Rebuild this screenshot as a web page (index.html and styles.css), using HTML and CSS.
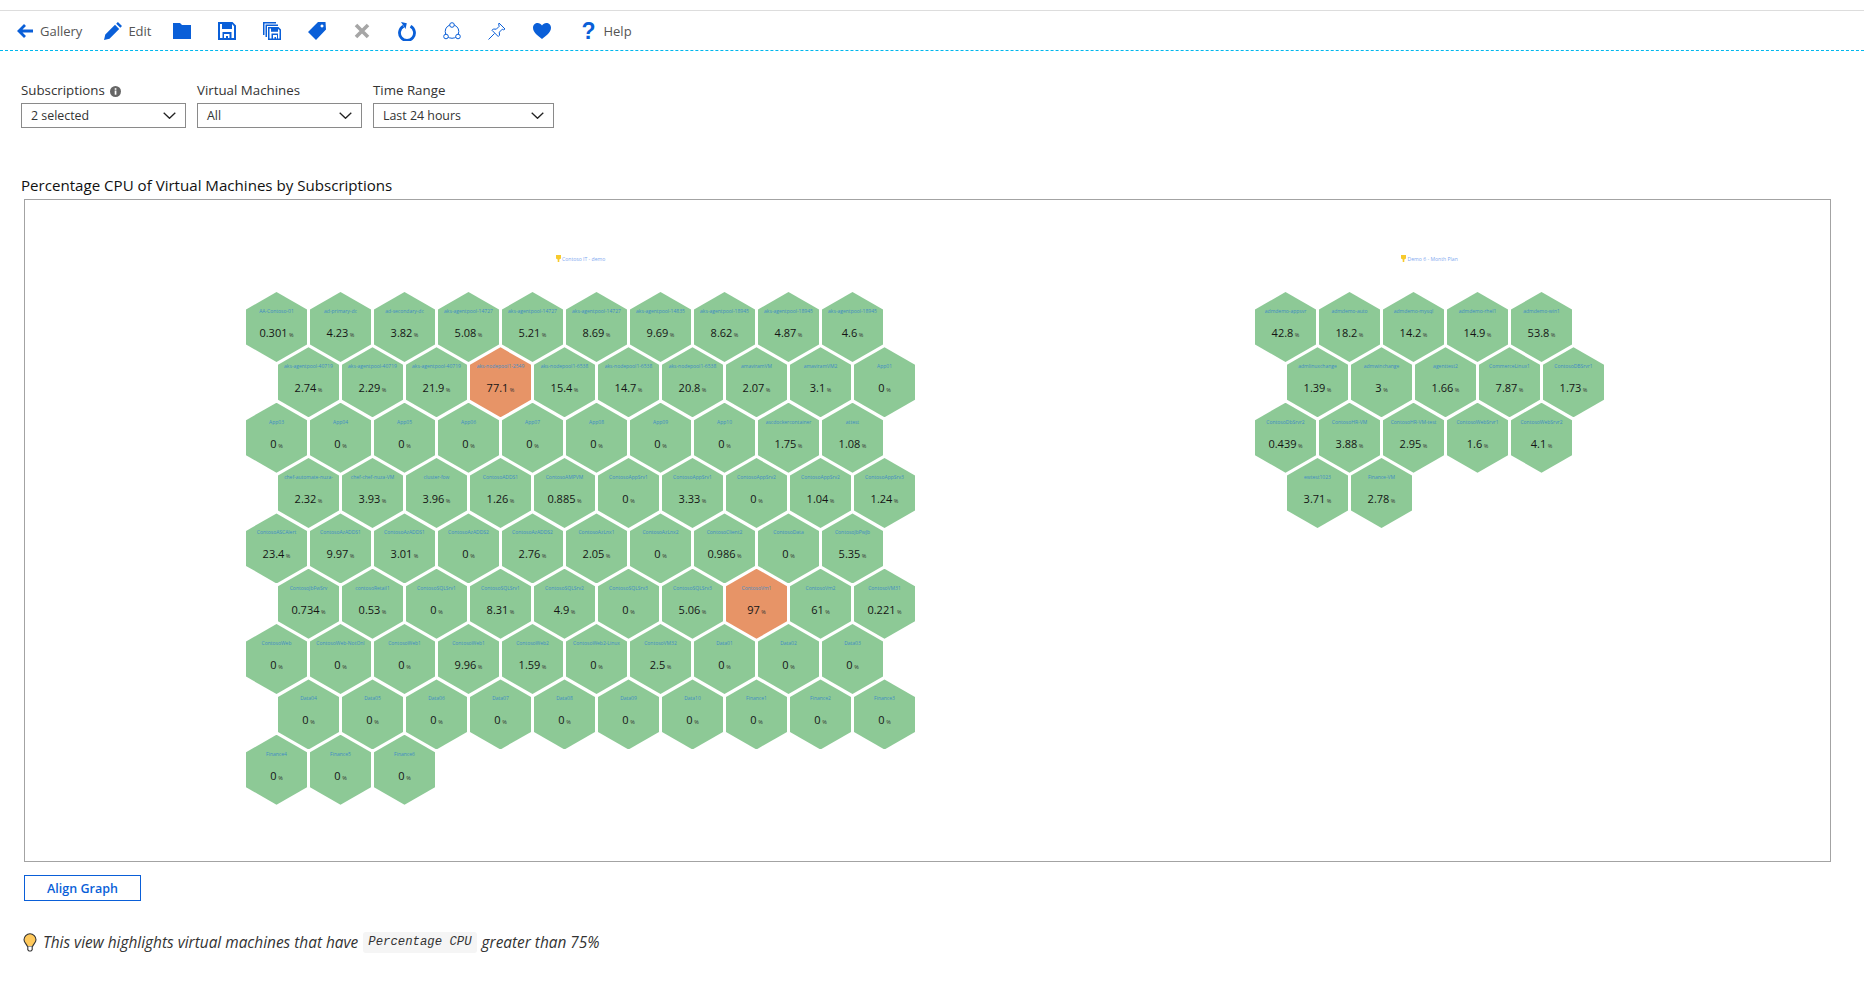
FILE: index.html
```html
<!DOCTYPE html>
<html lang="en">
<head>
<meta charset="utf-8">
<title>Percentage CPU of Virtual Machines</title>
<link rel="stylesheet" href="styles.css">
</head>
<body>
<div class="topline"></div>
<nav class="toolbar">
  <div class="tool tool-text"><svg class="ico" width="18" height="16" viewBox="0 0 18 16"><path class="st" d="M17 8H3M9 2L3 8l6 6"/></svg><span>Gallery</span></div>
  <div class="tool tool-text"><svg class="ico" width="18" height="18" viewBox="0 0 18 18"><path class="fl" d="M0 18l1.300-5.500L11 2.800l4.200 4.200L5.500 16.700zM12.200 1.700L13.900 0 18 4.100l-1.700 1.700z"/></svg><span>Edit</span></div>
  <div class="tool"><svg class="ico" width="18" height="16" viewBox="0 0 18 16"><path class="fl" d="M0 0h7l2 2h9v14H0z"/></svg></div>
  <div class="tool"><svg class="ico" width="18" height="18" viewBox="0 0 18 18"><path class="fl" fill-rule="evenodd" d="M0 0h14.500L18 3.500V18H0zM2 2v14h2.500v-6h9v6H16V4.300L14 2v5H4V2zM6 12v4h2v-2h2v2h1.500v-4z"/></svg></div>
  <div class="tool"><svg class="ico" width="18" height="18" viewBox="0 0 18 18"><path class="fl" fill-rule="evenodd" d="M0 0h13v1.500H1.500V13H0zM2.500 2.500H15v1.500H4V15H2.500zM5 5h10.500L18 7.500V18H5zM6.500 6.500v10h2v-5h6.500v5h1.500V8.200L15 6.800v3H8v-3.300zM10 13v3.500h1.500v-1.500h1.500v1.500H14V13z"/></svg></div>
  <div class="tool"><svg class="ico" width="18" height="18" viewBox="0 0 18 18"><path class="fl" fill-rule="evenodd" d="M10 0h7.500L18 7.500 8 18 0 10zM14 2.500a1.500 1.500 0 1 0 .01 0z"/></svg></div>
  <div class="tool"><svg class="ico" width="18" height="18" viewBox="0 0 18 18"><path class="st st-gray" d="M3 3l12 12M15 3L3 15"/></svg></div>
  <div class="tool"><svg class="ico" width="18" height="20" viewBox="0 0 18 20"><path class="st" d="M5.500 5.300a7.500 7.500 0 1 0 7 0"/><path class="fl" d="M3 1l5.800 1.200L7.500 8z"/></svg></div>
  <div class="tool"><svg class="ico" width="18" height="18" viewBox="0 0 18 18"><circle class="ln" cx="9" cy="9.500" r="6.800"/><circle class="wh" cx="9" cy="3" r="2.300"/><circle class="wh" cx="3" cy="14.500" r="2.300"/><circle class="wh" cx="15" cy="14.500" r="2.300"/></svg></div>
  <div class="tool"><svg class="ico" width="18" height="18" viewBox="0 0 18 18"><path class="ln" d="M11 1l6 6-1.500.8-1.200-.6-3 3 .2 3-1.300 1.300L4 8.300l1.300-1.300 3 .2 3-3-.6-1.200zM6.500 11.500L.5 17.500"/></svg></div>
  <div class="tool"><svg class="ico" width="18" height="16" viewBox="0 0 18 16"><path class="fl" d="M9 16C5 12.700 0 9.500 0 4.800 0 2 2.200 0 4.700 0 6.400 0 8 .9 9 2.500 10 .9 11.600 0 13.300 0 15.800 0 18 2 18 4.800 18 9.500 13 12.700 9 16z"/></svg></div>
  <div class="tool tool-help"><span class="qmark">?</span><span>Help</span></div>
</nav>

<main class="content">
  <section class="filters">
    <div class="filter">
      <label class="filter-label">Subscriptions <svg class="info" width="11" height="11" viewBox="0 0 11 11"><circle cx="5.500" cy="5.500" r="5.500" fill="#666"/><rect x="4.700" y="4.500" width="1.700" height="4.200" fill="#fff"/><rect x="4.700" y="2.200" width="1.700" height="1.600" fill="#fff"/></svg></label>
      <div class="select select-sm"><span>2 selected</span><svg width="13" height="7" viewBox="0 0 13 7"><path class="chev" d="M.7.7l5.800 5.600L12.300.7"/></svg></div>
    </div>
    <div class="filter">
      <label class="filter-label">Virtual Machines</label>
      <div class="select select-sm"><span>All</span><svg width="13" height="7" viewBox="0 0 13 7"><path class="chev" d="M.7.7l5.800 5.600L12.300.7"/></svg></div>
    </div>
    <div class="filter">
      <label class="filter-label">Time Range</label>
      <div class="select select-lg"><span>Last 24 hours</span><svg width="13" height="7" viewBox="0 0 13 7"><path class="chev" d="M.7.7l5.800 5.600L12.300.7"/></svg></div>
    </div>
  </section>

  <h2 class="graph-title">Percentage CPU of Virtual Machines by Subscriptions</h2>

  <section class="graph">
    <div class="group group-a">
      <div class="group-title"><svg width="5" height="7" viewBox="0 0 5 7"><path d="M0 0h5v3.500L3.300 4.500V7H1.700V4.500L0 3.500z" fill="#f7ca2d"/></svg> Contoso IT - demo</div>
      <div class="hexes">
        <div class="row">
          <div class="hex"><span class="name">AA-Contoso-01</span><span class="val">0.301<small>%</small></span></div>
          <div class="hex"><span class="name">ad-primary-dc</span><span class="val">4.23<small>%</small></span></div>
          <div class="hex"><span class="name">ad-secondary-dc</span><span class="val">3.82<small>%</small></span></div>
          <div class="hex"><span class="name">aks-agentpool-14727</span><span class="val">5.08<small>%</small></span></div>
          <div class="hex"><span class="name">aks-agentpool-14727</span><span class="val">5.21<small>%</small></span></div>
          <div class="hex"><span class="name">aks-agentpool-14727</span><span class="val">8.69<small>%</small></span></div>
          <div class="hex"><span class="name">aks-agentpool-14835</span><span class="val">9.69<small>%</small></span></div>
          <div class="hex"><span class="name">aks-agentpool-18945</span><span class="val">8.62<small>%</small></span></div>
          <div class="hex"><span class="name">aks-agentpool-18945</span><span class="val">4.87<small>%</small></span></div>
          <div class="hex"><span class="name">aks-agentpool-18945</span><span class="val">4.6<small>%</small></span></div>
        </div>
        <div class="row row-odd">
          <div class="hex"><span class="name">aks-agentpool-40719</span><span class="val">2.74<small>%</small></span></div>
          <div class="hex"><span class="name">aks-agentpool-40719</span><span class="val">2.29<small>%</small></span></div>
          <div class="hex"><span class="name">aks-agentpool-40719</span><span class="val">21.9<small>%</small></span></div>
          <div class="hex hot"><span class="name">aks-nodepool1-2549</span><span class="val">77.1<small>%</small></span></div>
          <div class="hex"><span class="name">aks-nodepool1-6538</span><span class="val">15.4<small>%</small></span></div>
          <div class="hex"><span class="name">aks-nodepool1-6538</span><span class="val">14.7<small>%</small></span></div>
          <div class="hex"><span class="name">aks-nodepool1-6538</span><span class="val">20.8<small>%</small></span></div>
          <div class="hex"><span class="name">amaviramVM</span><span class="val">2.07<small>%</small></span></div>
          <div class="hex"><span class="name">amaviramVM2</span><span class="val">3.1<small>%</small></span></div>
          <div class="hex"><span class="name">App01</span><span class="val">0<small>%</small></span></div>
        </div>
        <div class="row">
          <div class="hex"><span class="name">App03</span><span class="val">0<small>%</small></span></div>
          <div class="hex"><span class="name">App04</span><span class="val">0<small>%</small></span></div>
          <div class="hex"><span class="name">App05</span><span class="val">0<small>%</small></span></div>
          <div class="hex"><span class="name">App06</span><span class="val">0<small>%</small></span></div>
          <div class="hex"><span class="name">App07</span><span class="val">0<small>%</small></span></div>
          <div class="hex"><span class="name">App08</span><span class="val">0<small>%</small></span></div>
          <div class="hex"><span class="name">App09</span><span class="val">0<small>%</small></span></div>
          <div class="hex"><span class="name">App10</span><span class="val">0<small>%</small></span></div>
          <div class="hex"><span class="name">ascdockercontainer</span><span class="val">1.75<small>%</small></span></div>
          <div class="hex"><span class="name">attest</span><span class="val">1.08<small>%</small></span></div>
        </div>
        <div class="row row-odd">
          <div class="hex"><span class="name">chef-automate-nuza-</span><span class="val">2.32<small>%</small></span></div>
          <div class="hex"><span class="name">chef-chef-nuza-VM</span><span class="val">3.93<small>%</small></span></div>
          <div class="hex"><span class="name">cluster-fow</span><span class="val">3.96<small>%</small></span></div>
          <div class="hex"><span class="name">ContosoADDS1</span><span class="val">1.26<small>%</small></span></div>
          <div class="hex"><span class="name">ContosoAMPVM</span><span class="val">0.885<small>%</small></span></div>
          <div class="hex"><span class="name">ContosoAppSrv1</span><span class="val">0<small>%</small></span></div>
          <div class="hex"><span class="name">ContosoAppSrv1</span><span class="val">3.33<small>%</small></span></div>
          <div class="hex"><span class="name">ContosoAppSrv2</span><span class="val">0<small>%</small></span></div>
          <div class="hex"><span class="name">ContosoAppSrv2</span><span class="val">1.04<small>%</small></span></div>
          <div class="hex"><span class="name">ContosoAppSrv3</span><span class="val">1.24<small>%</small></span></div>
        </div>
        <div class="row">
          <div class="hex"><span class="name">ContosoASCAlert</span><span class="val">23.4<small>%</small></span></div>
          <div class="hex"><span class="name">ContosoAzADDS1</span><span class="val">9.97<small>%</small></span></div>
          <div class="hex"><span class="name">ContosoAzADDS1</span><span class="val">3.01<small>%</small></span></div>
          <div class="hex"><span class="name">ContosoAzADDS2</span><span class="val">0<small>%</small></span></div>
          <div class="hex"><span class="name">ContosoAzADDS2</span><span class="val">2.76<small>%</small></span></div>
          <div class="hex"><span class="name">ContosoAzLnx1</span><span class="val">2.05<small>%</small></span></div>
          <div class="hex"><span class="name">ContosoAzLnx2</span><span class="val">0<small>%</small></span></div>
          <div class="hex"><span class="name">ContosoClient2</span><span class="val">0.986<small>%</small></span></div>
          <div class="hex"><span class="name">ContosoData</span><span class="val">0<small>%</small></span></div>
          <div class="hex"><span class="name">ContosoJbPwJb</span><span class="val">5.35<small>%</small></span></div>
        </div>
        <div class="row row-odd">
          <div class="hex"><span class="name">ContosoJbFwSrv</span><span class="val">0.734<small>%</small></span></div>
          <div class="hex"><span class="name">contosoRetail1</span><span class="val">0.53<small>%</small></span></div>
          <div class="hex"><span class="name">ContosoSQLSrv1</span><span class="val">0<small>%</small></span></div>
          <div class="hex"><span class="name">ContosoSQLSrv1</span><span class="val">8.31<small>%</small></span></div>
          <div class="hex"><span class="name">ContosoSQLSrv2</span><span class="val">4.9<small>%</small></span></div>
          <div class="hex"><span class="name">ContosoSQLSrv3</span><span class="val">0<small>%</small></span></div>
          <div class="hex"><span class="name">ContosoSQLSrv3</span><span class="val">5.06<small>%</small></span></div>
          <div class="hex hot"><span class="name">ContosoVm1</span><span class="val">97<small>%</small></span></div>
          <div class="hex"><span class="name">ContosoVm2</span><span class="val">61<small>%</small></span></div>
          <div class="hex"><span class="name">ContosoVM31</span><span class="val">0.221<small>%</small></span></div>
        </div>
        <div class="row">
          <div class="hex"><span class="name">ContosoWeb</span><span class="val">0<small>%</small></span></div>
          <div class="hex"><span class="name">ContosoWeb-NotOnl</span><span class="val">0<small>%</small></span></div>
          <div class="hex"><span class="name">ContosoWeb1</span><span class="val">0<small>%</small></span></div>
          <div class="hex"><span class="name">ContosoWeb1</span><span class="val">9.96<small>%</small></span></div>
          <div class="hex"><span class="name">ContosoWeb2</span><span class="val">1.59<small>%</small></span></div>
          <div class="hex"><span class="name">ContosoWeb2-Linux</span><span class="val">0<small>%</small></span></div>
          <div class="hex"><span class="name">ContosoVM32</span><span class="val">2.5<small>%</small></span></div>
          <div class="hex"><span class="name">Data01</span><span class="val">0<small>%</small></span></div>
          <div class="hex"><span class="name">Data02</span><span class="val">0<small>%</small></span></div>
          <div class="hex"><span class="name">Data03</span><span class="val">0<small>%</small></span></div>
        </div>
        <div class="row row-odd">
          <div class="hex"><span class="name">Data04</span><span class="val">0<small>%</small></span></div>
          <div class="hex"><span class="name">Data05</span><span class="val">0<small>%</small></span></div>
          <div class="hex"><span class="name">Data06</span><span class="val">0<small>%</small></span></div>
          <div class="hex"><span class="name">Data07</span><span class="val">0<small>%</small></span></div>
          <div class="hex"><span class="name">Data08</span><span class="val">0<small>%</small></span></div>
          <div class="hex"><span class="name">Data09</span><span class="val">0<small>%</small></span></div>
          <div class="hex"><span class="name">Data10</span><span class="val">0<small>%</small></span></div>
          <div class="hex"><span class="name">Finance1</span><span class="val">0<small>%</small></span></div>
          <div class="hex"><span class="name">Finance2</span><span class="val">0<small>%</small></span></div>
          <div class="hex"><span class="name">Finance3</span><span class="val">0<small>%</small></span></div>
        </div>
        <div class="row">
          <div class="hex"><span class="name">Finance4</span><span class="val">0<small>%</small></span></div>
          <div class="hex"><span class="name">Finance5</span><span class="val">0<small>%</small></span></div>
          <div class="hex"><span class="name">Finance6</span><span class="val">0<small>%</small></span></div>
        </div>
      </div>
    </div>

    <div class="group group-b">
      <div class="group-title"><svg width="5" height="7" viewBox="0 0 5 7"><path d="M0 0h5v3.500L3.300 4.500V7H1.700V4.500L0 3.500z" fill="#f7ca2d"/></svg> Demo 6 - Month Plan</div>
      <div class="hexes">
        <div class="row">
          <div class="hex"><span class="name">admdemo-appsvr</span><span class="val">42.8<small>%</small></span></div>
          <div class="hex"><span class="name">admdemo-auto</span><span class="val">18.2<small>%</small></span></div>
          <div class="hex"><span class="name">admdemo-mysql</span><span class="val">14.2<small>%</small></span></div>
          <div class="hex"><span class="name">admdemo-rhel1</span><span class="val">14.9<small>%</small></span></div>
          <div class="hex"><span class="name">admdemo-win1</span><span class="val">53.8<small>%</small></span></div>
        </div>
        <div class="row row-odd">
          <div class="hex"><span class="name">admlinuxchange</span><span class="val">1.39<small>%</small></span></div>
          <div class="hex"><span class="name">admwinchange</span><span class="val">3<small>%</small></span></div>
          <div class="hex"><span class="name">agenttest2</span><span class="val">1.66<small>%</small></span></div>
          <div class="hex"><span class="name">CommerceLinux1</span><span class="val">7.87<small>%</small></span></div>
          <div class="hex"><span class="name">ContosoDBSrvr1</span><span class="val">1.73<small>%</small></span></div>
        </div>
        <div class="row">
          <div class="hex"><span class="name">ContosoDbSrvr2</span><span class="val">0.439<small>%</small></span></div>
          <div class="hex"><span class="name">ContosoHR-VM</span><span class="val">3.88<small>%</small></span></div>
          <div class="hex"><span class="name">ContosoHR-VM-test</span><span class="val">2.95<small>%</small></span></div>
          <div class="hex"><span class="name">ContosoWebSrvr1</span><span class="val">1.6<small>%</small></span></div>
          <div class="hex"><span class="name">ContosoWebSrvr2</span><span class="val">4.1<small>%</small></span></div>
        </div>
        <div class="row row-odd">
          <div class="hex"><span class="name">ewtest1023</span><span class="val">3.71<small>%</small></span></div>
          <div class="hex"><span class="name">Finance-VM</span><span class="val">2.78<small>%</small></span></div>
        </div>
      </div>
    </div>
  </section>

  <button class="align-btn" type="button">Align Graph</button>

  <p class="tip"><svg class="bulb" width="14" height="19" viewBox="0 0 14 19"><path d="M7 .8a6 6 0 0 0-6 6c0 2.600 2.500 4.300 3.500 6.700h5C10.500 11.100 13 9.400 13 6.800a6 6 0 0 0-6-6z" fill="#ffc95c" stroke="#333" stroke-width="1.100"/><path d="M4.800 13.500v3.200L6 18h2l1.200-1.300v-3.200" fill="#fff" stroke="#333" stroke-width="1.100"/></svg><span class="tip-text">This view highlights virtual machines that have</span> <code class="chip">Percentage CPU</code> <span class="tip-text">greater than 75%</span></p>
</main>
</body>
</html>
```
FILE: styles.css
```css
* { box-sizing: border-box; }
html, body { margin: 0; height: 100%; overflow: hidden; background: #fff; }
body { font-family: "Open Sans", "Noto Sans", sans-serif; color: #222; font-size: 13px; }

.topline { height: 11px; border-bottom: 1px solid #ddd; }

.toolbar {
  height: 40px;
  padding-left: 16px;
  display: flex;
  align-items: center;
  gap: 27px;
  border-bottom: 1px dashed #00b7ee;
}
.tool { display: flex; align-items: center; gap: 6px; color: #555; height: 22px; }
.tool-text { margin-right: -5px; }
.tool-help { gap: 9px; margin-left: 3px; }
.ico { display: block; flex: none; }
.st { fill: none; stroke: #0a5fd8; stroke-width: 2.800; }
.st-gray { stroke: #a6a6a6; stroke-width: 3.600; }
.fl { fill: #0a5fd8; }
.ln { fill: none; stroke: #0a5fd8; stroke-width: 1; }
.wh { fill: #fff; stroke: #0a5fd8; stroke-width: 1; }
.qmark { color: #0a5fd8; font: bold 23px/22px "Liberation Sans", sans-serif; width: 13px; text-align: center; }

.content { padding: 30px 0 0 21px; }

.filters { display: flex; gap: 11px; }
.filter-label { display: block; font-size: 13.300px; line-height: 18px; margin-bottom: 4px; color: #333; }
.info { vertical-align: -2px; margin-left: 2px; }
.select {
  height: 25px;
  border: 1px solid #8a8a8a;
  padding: 0 9px 0 9px;
  display: flex;
  align-items: center;
  justify-content: space-between;
  font-size: 12.400px;
  color: #333;
}
.select-sm { width: 165px; }
.select-lg { width: 181px; }
.chev { fill: none; stroke: #222; stroke-width: 1.300; }

.graph-title { margin: 47px 0 4px; font-size: 15.100px; line-height: 20px; font-weight: 500; color: #111; }

.graph {
  position: relative;
  margin-left: 3px;
  width: 1807px;
  height: 663px;
  border: 1px solid #a3a3a3;
  background: #fff;
}
.group { position: absolute; top: 55px; }
.group-a { left: 221px; width: 669px; }
.group-b { left: 1230px; width: 349px; }
.group-title {
  height: 8px;
  line-height: 8px;
  font-size: 5.100px;
  color: #7fa9ef;
  text-align: center;
  white-space: nowrap;
  margin-bottom: 29px;
}
.group-title svg { vertical-align: -1px; }

.row { display: flex; gap: 3px; height: 70px; }
.row + .row { margin-top: -14.670px; }
.row-odd { margin-left: 32px; }

.hex {
  width: 61px;
  height: 70px;
  flex: none;
  background: #8dc996;
  clip-path: polygon(50% 0, 100% 25%, 100% 75%, 50% 100%, 0 75%, 0 25%);
  display: flex;
  flex-direction: column;
  align-items: center;
  padding-top: 15px;
  overflow: hidden;
  white-space: nowrap;
}
.hot { background: #e79467; }
.name { height: 8px; line-height: 8px; font-size: 5px; color: #3f8cc4; }
.val { margin-top: 11px; height: 14px; line-height: 14px; font-size: 11px; color: #151515; }
.val small { font-size: 5.500px; margin-left: 1.500px; color: #333; }

.align-btn {
  display: block;
  margin: 13px 0 0 3px;
  width: 117px;
  height: 26px;
  padding: 0;
  border: 1px solid #0a5fd8;
  background: #fff;
  color: #0a5fd8;
  font-family: "Open Sans", sans-serif;
  font-size: 12.500px;
  font-weight: 600;
}

.tip { margin: 30px 0 0 2px; display: flex; align-items: center; height: 22px; font-style: italic; font-size: 15.400px; color: #333; white-space: pre; }
.bulb { flex: none; margin-right: 6px; }
.chip {
  font: italic 12.300px/21px "Liberation Mono", monospace;
  background: #f5f5f5;
  border-radius: 3px;
  padding: 0 5px;
  margin: 0 5px;
  height: 21px;
  color: #333;
}
```
